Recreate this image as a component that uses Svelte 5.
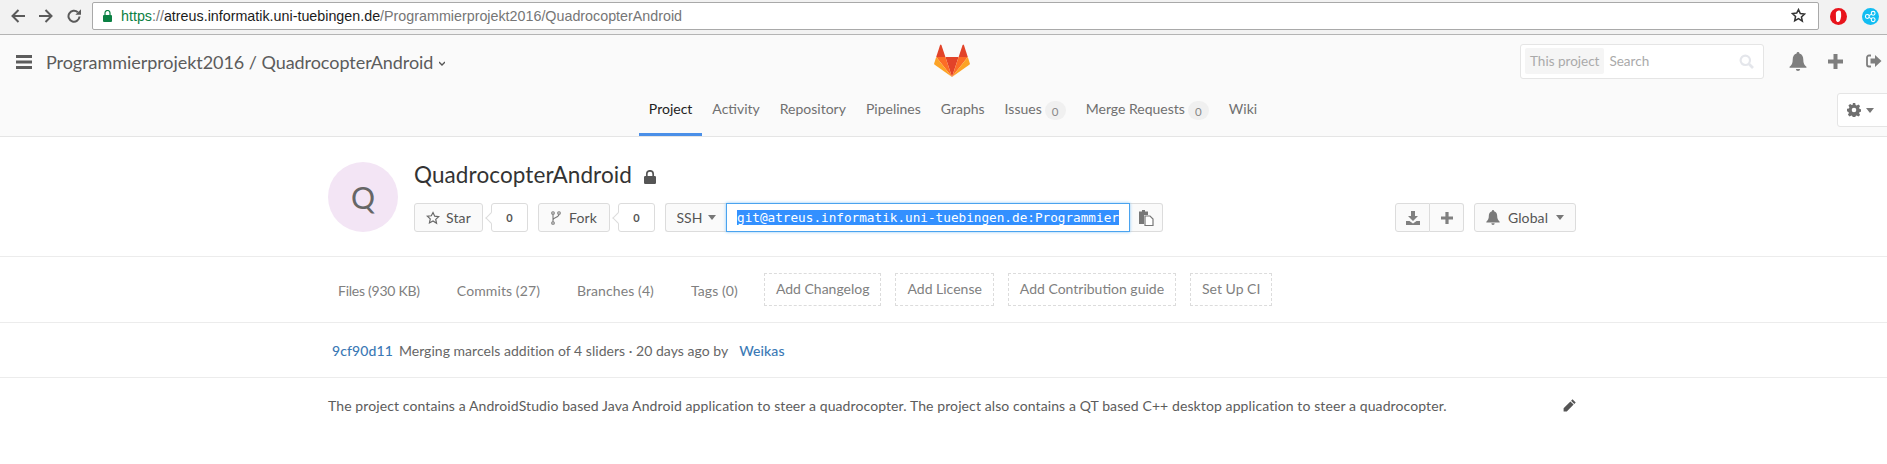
<script>
  const navLinks = [
    { label: 'Project', active: true },
    { label: 'Activity' },
    { label: 'Repository' },
    { label: 'Pipelines' },
    { label: 'Graphs' },
    { label: 'Issues', badge: 0 },
    { label: 'Merge Requests', badge: 0 },
    { label: 'Wiki' }
  ];
  const stats = ['Files (930 KB)', 'Commits (27)', 'Branches (4)', 'Tags (0)'];
  const addLinks = ['Add Changelog', 'Add License', 'Add Contribution guide', 'Set Up CI'];
</script>

<div class="page">
  <div class="chrome">
    <div class="chrome-nav">
      <svg width="14" height="14" viewBox="0 0 14 14"><path d="M14 7H2M7.500 1 1.500 7l6 6" fill="none" stroke="#5a5a5a" stroke-width="2"/></svg>
      <svg width="14" height="14" viewBox="0 0 14 14"><path d="M0 7h12M6.500 1l6 6-6 6" fill="none" stroke="#5a5a5a" stroke-width="2"/></svg>
      <svg width="14" height="14" viewBox="0 0 14 14"><path d="M12.500 7.500A5.500 5.500 0 1 1 10.800 3.200" fill="none" stroke="#5a5a5a" stroke-width="2"/><path d="M8.400 5.800H14V.2z" fill="#5a5a5a"/></svg>
    </div>
    <div class="omnibox">
      <svg class="lock" width="9" height="12" viewBox="0 0 9 12"><path d="M1 5h7a1 1 0 0 1 1 1v5a1 1 0 0 1-1 1H1a1 1 0 0 1-1-1V6a1 1 0 0 1 1-1z" fill="#0b8043"/><path d="M2 5.500V3a2.500 2.500 0 0 1 5 0v2.500" fill="none" stroke="#0b8043" stroke-width="1.200"/></svg>
      <span class="url"><span class="https">https</span><span class="dim">://</span>atreus.informatik.uni-tuebingen.de<span class="dim">/Programmierprojekt2016/QuadrocopterAndroid</span></span>
      <svg class="star" width="15" height="15" viewBox="0 0 24 24"><path d="M12 2.500l2.900 6.300 6.900.8-5.100 4.700 1.400 6.800L12 17l-6.100 3.400 1.400-6.800L2.200 8.900l6.900-.8z" fill="none" stroke="#333" stroke-width="2.400"/></svg>
    </div>
    <div class="exts">
      <svg width="17" height="17" viewBox="0 0 16 16"><circle cx="8" cy="8" r="8" fill="#e8141c"/><path d="M5.500 4.800C6 2.300 9.300 1.700 10.200 3.500c.6 3 .4 6-1 8.800-1.300 1.500-3 1-3.500-.5z" fill="#fff"/></svg>
      <svg width="17" height="17" viewBox="0 0 16 16"><circle cx="8" cy="8" r="8" fill="#12bdf2"/><g fill="none" stroke="#fff" stroke-width="1"><circle cx="5" cy="8" r="1.800"/><circle cx="10.500" cy="5" r="1.800"/><circle cx="10.500" cy="11" r="1.800"/><path d="M6.600 7.200 9 5.800M6.600 8.800 9 10.200"/></g></svg>
    </div>
  </div>

  <header class="topbar">
    <div class="topbar-row">
      <div class="crumb">
        <svg width="16" height="14" viewBox="0 0 16 14"><path d="M0 0h16v3H0zM0 5.500h16v3H0zM0 11h16v3H0z" fill="#5c5c5c"/></svg>
        <span class="crumb-text">Programmierprojekt2016 / QuadrocopterAndroid</span>
        <svg class="crumb-caret" width="6" height="5" viewBox="0 0 6 5"><path d="M0 1l3 3 3-3" fill="none" stroke="#555" stroke-width="1.300"/></svg>
      </div>
      <svg class="logo" width="36" height="34" viewBox="0 0 36 34">
        <path d="M18 33 11.400 13h13.200z" fill="#e24329"/>
        <path d="M18 33 11.400 13H2.200z" fill="#fc6d26"/>
        <path d="M2.200 13 .2 19.200a1.400 1.400 0 0 0 .5 1.500L18 33z" fill="#fca326"/>
        <path d="M2.200 13h9.200L7.400 1a.7.7 0 0 0-1.300 0z" fill="#e24329"/>
        <path d="M18 33l6.600-20h9.200z" fill="#fc6d26"/>
        <path d="M33.800 13l2 6.200a1.400 1.400 0 0 1-.5 1.500L18 33z" fill="#fca326"/>
        <path d="M33.800 13h-9.200l4-12a.7.7 0 0 1 1.300 0z" fill="#e24329"/>
      </svg>
      <div class="tools">
        <div class="search">
          <span class="scope">This project</span>
          <span class="placeholder">Search</span>
          <svg width="15" height="15" viewBox="0 0 15 15"><circle cx="6.300" cy="6.300" r="4.700" fill="none" stroke="#e4e6eb" stroke-width="2.200"/><path d="M10 10l4 4" stroke="#e4e6eb" stroke-width="2.600"/></svg>
        </div>
        <svg class="tool-bell" width="18" height="19" viewBox="0 0 16 18"><path d="M8 0a1.300 1.300 0 0 1 1.300 1.400C12 2 13 4.500 13 7c0 3.500 1 5.500 3 7v1H0v-1c2-1.500 3-3.500 3-7 0-2.500 1-5 3.700-5.600A1.300 1.300 0 0 1 8 0zM6 16h4a2 2 0 0 1-4 0z" fill="#7e7e7e"/></svg>
        <svg class="tool-plus" width="15" height="15" viewBox="0 0 15 15"><path d="M5.500 0h4v5.500H15v4H9.500V15h-4V9.500H0v-4h5.500z" fill="#7e7e7e"/></svg>
        <svg class="tool-out" width="16" height="14" viewBox="0 0 16 14"><path d="M5 1.500H3A2 2 0 0 0 1 3.500v7a2 2 0 0 0 2 2h2" fill="none" stroke="#7e7e7e" stroke-width="1.800"/><path d="M9 1l6.500 6L9 13V9.500H4.500v-5H9z" fill="#7e7e7e"/></svg>
      </div>
    </div>
    <nav class="tabs">
      {#each navLinks as link}
        <span class="tab" class:active={link.active}>
          {link.label}{#if link.badge !== undefined}<span class="badge">{link.badge}</span>{/if}
        </span>
      {/each}
      <span class="gear">
        <svg width="14" height="14" viewBox="0 0 14 14"><path d="M5.800 0h2.400l.4 1.900 1.100.5 1.700-1 1.700 1.700-1 1.700.5 1.100 1.900.4v2.400l-1.900.4-.5 1.100 1 1.700-1.700 1.700-1.700-1-1.100.5-.4 1.900H5.800l-.4-1.900-1.100-.5-1.700 1L.9 11.800l1-1.700-.5-1.100L0 8.200V5.800l1.900-.4.500-1.100-1-1.700 1.700-1.700 1.700 1 1.100-.5zM7 4.700a2.300 2.300 0 1 0 0 4.600 2.300 2.300 0 0 0 0-4.600z" fill="#707070"/></svg>
        <i class="caret"></i>
      </span>
    </nav>
  </header>

  <section class="project">
    <div class="avatar">Q</div>
    <div class="project-main">
      <h1>QuadrocopterAndroid
        <svg width="12" height="14" viewBox="0 0 12 14"><path d="M1.200 6h9.600A1.200 1.200 0 0 1 12 7.200v5.600a1.200 1.200 0 0 1-1.200 1.200H1.200A1.200 1.200 0 0 1 0 12.800V7.200A1.200 1.200 0 0 1 1.200 6z" fill="#555"/><path d="M2.800 6.500V4a3.200 3.200 0 0 1 6.400 0v2.500" fill="none" stroke="#555" stroke-width="1.700"/></svg>
      </h1>
      <div class="actions">
        <span class="btn star-btn">
          <svg width="14" height="14" viewBox="0 0 24 24"><path d="M12 2.500l2.900 6.300 6.900.8-5.100 4.700 1.400 6.800L12 17l-6.100 3.400 1.400-6.800L2.200 8.900l6.900-.8z" fill="none" stroke="#666" stroke-width="2"/></svg>
          Star
        </span>
        <span class="count">0</span>
        <span class="btn fork-btn">
          <svg width="10" height="14" viewBox="0 0 10 14"><g fill="none" stroke="#777" stroke-width="1.100"><circle cx="2" cy="2" r="1.300"/><circle cx="8" cy="2" r="1.300"/><circle cx="2" cy="12" r="1.300"/><path d="M2 3.300v7.400M8 3.300C8 7 2 6 2 9"/></g></svg>
          Fork
        </span>
        <span class="count">0</span>
        <div class="clone">
          <span class="btn ssh">SSH <i class="caret"></i></span>
          <div class="clone-input"><span class="selected">git@atreus.informatik.uni-tuebingen.de:Programmier</span></div>
          <span class="btn copy">
            <svg width="15" height="16" viewBox="0 0 15 16"><path d="M0 1.500h9V5H5v9H0z" fill="#777"/><path d="M3 0h3v3H3z" fill="#777"/><path d="M6 6h5l3 3v6.500H6z" fill="#fff" stroke="#777" stroke-width="1.200"/></svg>
          </span>
        </div>
        <div class="right-actions">
          <div class="group">
            <span class="btn icon">
              <svg width="14" height="14" viewBox="0 0 14 14"><path d="M5 0h4v5h3L7 10 2 5h3zM0 10h3.500L7 12.500 10.500 10H14v4H0z" fill="#808080"/></svg>
            </span>
            <span class="btn icon">
              <svg width="12" height="12" viewBox="0 0 15 15"><path d="M5.500 0h4v5.500H15v4H9.500V15h-4V9.500H0v-4h5.500z" fill="#808080"/></svg>
            </span>
          </div>
          <span class="btn global">
            <svg width="14" height="15" viewBox="0 0 16 18"><path d="M8 0a1.300 1.300 0 0 1 1.300 1.400C12 2 13 4.500 13 7c0 3.500 1 5.500 3 7v1H0v-1c2-1.500 3-3.500 3-7 0-2.500 1-5 3.700-5.600A1.300 1.300 0 0 1 8 0zM6 16h4a2 2 0 0 1-4 0z" fill="#7a7a7a"/></svg>
            Global <i class="caret"></i>
          </span>
        </div>
      </div>
    </div>
  </section>

  <section class="stats">
    {#each stats as s}<span class="stat">{s}</span>{/each}
    {#each addLinks as a}<span class="add">{a}</span>{/each}
  </section>

  <section class="commit">
    <span class="sha">9cf90d11</span>
    <span class="msg">Merging marcels addition of 4 sliders · 20 days ago by</span>
    <span class="author">Weikas</span>
  </section>

  <section class="desc">
    <p>The project contains a AndroidStudio based Java Android application to steer a quadrocopter. The project also contains a QT based C++ desktop application to steer a quadrocopter.</p>
    <svg width="13" height="13" viewBox="0 0 13 13"><path d="M9.500.3l3.200 3.200-1.400 1.400-3.200-3.200zM7.400 2.400l3.200 3.200-6.800 6.800H.6V9.200z" fill="#555"/></svg>
  </section>
</div>

<style>
  :global(body) {
    margin: 0;
    background: #fff;
  }

  .page {
    width: 1887px;
    height: 464px;
    overflow: hidden;
    font-family: "Lato", "Noto Sans", sans-serif;
    font-size: 14px;
    letter-spacing: 0.1px;
    color: #5c5c5c;
  }

  .chrome {
    height: 35px;
    box-sizing: border-box;
    background: #f2f2f2;
    border-bottom: 1px solid #b4b4b4;
    display: flex;
    align-items: flex-start;
    padding: 2px 0 0 11px;
    letter-spacing: 0;
  }
  .chrome-nav {
    display: flex;
    gap: 14px;
    width: 81px;
    padding-top: 7px;
  }
  .omnibox {
    width: 1727px;
    height: 28px;
    box-sizing: border-box;
    background: #fff;
    border: 1px solid #a9a9a9;
    border-radius: 2px;
    display: flex;
    align-items: center;
    padding: 0 12px 1px 10px;
  }
  .lock { margin-right: 9px; }
  .url {
    font-family: "Liberation Sans", sans-serif;
    font-size: 14.300px;
    color: #1c1c1c;
    flex: 1;
  }
  .https { color: #0b8043; }
  .dim { color: #767676; }
  .exts {
    display: flex;
    gap: 15px;
    margin: 6px 0 0 11px;
  }

  .topbar {
    height: 102px;
    box-sizing: border-box;
    background: #fafafa;
    border-bottom: 1px solid #e5e5e5;
    position: relative;
  }
  .topbar-row {
    height: 56px;
    display: grid;
    grid-template-columns: 1fr auto 1fr;
    align-items: center;
  }
  .crumb {
    display: flex;
    align-items: center;
    padding-left: 16px;
    margin-top: -3px;
  }
  .crumb-text {
    font-size: 18px;
    color: #5c5c5c;
    margin-left: 14px;
    letter-spacing: -0.05px;
  }
  .crumb-caret { margin: 4px 0 0 6px; }
  .logo { margin: -4px 0 0 17px; }
  .tools {
    display: flex;
    align-items: center;
    justify-content: flex-end;
    padding-right: 5px;
    margin-top: -4px;
  }
  .search {
    width: 244px;
    height: 35px;
    box-sizing: border-box;
    background: #fff;
    border: 1px solid #e5e5e5;
    border-radius: 3px;
    display: flex;
    align-items: center;
    padding: 0 9px 0 4px;
    color: #aaa;
    font-size: 13.500px;
    letter-spacing: 0;
  }
  .scope {
    background: #f5f5f5;
    border-radius: 2px;
    padding: 5px 5px;
  }
  .placeholder { margin-left: 5px; flex: 1; }
  .tool-bell { margin-left: 25px; }
  .tool-plus { margin-left: 21px; }
  .tool-out { margin-left: 23px; }

  .tabs {
    height: 45px;
    display: flex;
    justify-content: center;
    gap: 20px;
    align-items: flex-start;
    padding-left: 19px;
    letter-spacing: 0;
  }
  .tab {
    color: #707070;
    height: 45px;
    padding-top: 9px;
    box-sizing: border-box;
    display: flex;
    align-items: flex-start;
  }
  .tab.active {
    color: #222;
    border-bottom: 3px solid #4a8fe8;
    padding: 9px 10px 0;
    margin: 0 -10px;
  }
  .badge {
    display: inline-block;
    min-width: 21px;
    height: 19px;
    line-height: 22px;
    border-radius: 10px;
    background: #f0f0f0;
    font-size: 11.500px;
    color: #888;
    text-align: center;
    margin: 1px 0 0 3px;
  }
  .gear {
    position: absolute;
    right: -5px;
    top: 58px;
    width: 55px;
    height: 34px;
    box-sizing: border-box;
    background: #fff;
    border: 1px solid #e5e5e5;
    border-radius: 3px;
    display: flex;
    align-items: center;
    gap: 5px;
    padding-left: 9px;
  }

  .caret {
    display: inline-block;
    width: 0;
    height: 0;
    border: 4px solid transparent;
    border-top: 5px solid #777;
    border-bottom: 0;
    vertical-align: 2px;
  }

  .project {
    height: 120px;
    box-sizing: border-box;
    border-bottom: 1px solid #ececec;
    display: flex;
    padding: 25px 311px 0 328px;
    gap: 16px;
  }
  .avatar {
    width: 70px;
    height: 70px;
    flex: none;
    border-radius: 50%;
    background: #f3e5f5;
    color: #666;
    font-size: 30px;
    line-height: 70px;
    text-align: center;
  }
  .project-main { flex: 1; }
  h1 {
    margin: 0;
    height: 41px;
    font-size: 22.500px;
    font-weight: 400;
    color: #333;
    line-height: 26px;
    letter-spacing: 0.1px;
  }
  h1 svg { margin-left: 6px; vertical-align: -1px; }
  .actions {
    display: flex;
    align-items: stretch;
    height: 29px;
  }
  .btn {
    box-sizing: border-box;
    background: #fafafa;
    border: 1px solid #dcdcdc;
    border-radius: 3px;
    display: inline-flex;
    align-items: center;
    justify-content: center;
    color: #555;
    gap: 6px;
  }
  .star-btn { width: 69px; }
  .fork-btn { width: 72px; gap: 8px; }
  .count {
    box-sizing: border-box;
    position: relative;
    width: 37px;
    background: #fff;
    border: 1px solid #dcdcdc;
    border-radius: 3px;
    margin: 0 10px 0 8px;
    display: flex;
    align-items: center;
    justify-content: center;
    font-size: 11px;
    font-weight: 700;
    color: #555;
  }
  .count::before {
    content: "";
    position: absolute;
    left: -5px;
    top: 10px;
    width: 7px;
    height: 7px;
    background: #fff;
    border-left: 1px solid #dcdcdc;
    border-bottom: 1px solid #dcdcdc;
    transform: rotate(45deg);
  }
  .clone { display: flex; }
  .ssh {
    width: 61px;
    border-radius: 3px 0 0 3px;
    border-right: 0;
    gap: 5px;
  }
  .clone-input {
    box-sizing: border-box;
    width: 404px;
    background: #fff;
    border: 1px solid #4aa3ef;
    box-shadow: 0 0 3px #8cc8f6;
    display: flex;
    align-items: center;
    padding-left: 10px;
    position: relative;
    font-family: "DejaVu Sans Mono", monospace;
    font-size: 12.700px;
    letter-spacing: 0;
  }
  .selected {
    background: #3390ff;
    color: #fff;
    line-height: 15px;
  }
  .copy {
    width: 33px;
    border-left: 0;
    border-radius: 0 3px 3px 0;
  }
  .right-actions {
    display: flex;
    gap: 10px;
    margin-left: auto;
  }
  .group { display: flex; }
  .icon {
    width: 35px;
    border-radius: 3px 0 0 3px;
  }
  .icon + .icon {
    width: 34px;
    border-left: 0;
    border-radius: 0 3px 3px 0;
  }
  .global {
    width: 102px;
    gap: 8px;
  }

  .stats {
    height: 66px;
    box-sizing: border-box;
    border-bottom: 1px solid #ececec;
    display: flex;
    align-items: flex-start;
    padding: 16px 0 0 338px;
    color: #808080;
  }
  .stat {
    margin-right: 37px;
    padding-top: 9px;
  }
  .stat:first-child { letter-spacing: -0.25px; }
  .stat:nth-child(4) { margin-right: 26px; }
  .add {
    height: 33px;
    box-sizing: border-box;
    border: 1px dashed #dcdcdc;
    padding: 0 11px;
    margin-right: 14px;
    line-height: 30px;
    letter-spacing: 0;
  }

  .commit {
    height: 55px;
    box-sizing: border-box;
    border-bottom: 1px solid #ececec;
    display: flex;
    align-items: center;
    padding: 0 0 0 332px;
    gap: 6px;
  }
  .sha, .author {
    color: #3b79b5;
    font-weight: 500;
  }
  .author { margin-left: 5px; }
  .msg { color: #666; letter-spacing: 0.03px; }

  .desc {
    display: flex;
    justify-content: space-between;
    align-items: center;
    padding: 19px 311px 0 328px;
    color: #5c5c5c;
  }
  .desc p { margin: 0; }
</style>
